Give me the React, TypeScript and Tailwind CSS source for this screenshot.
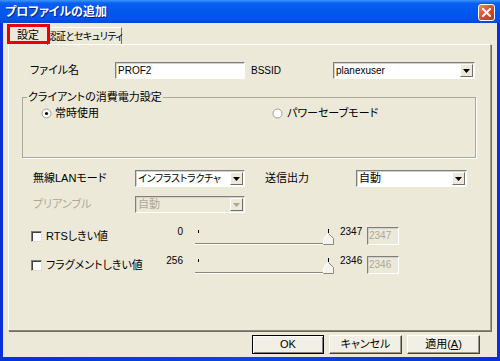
import React from 'react';

const FONT = "font-['Liberation_Sans','Noto_Sans_CJK_JP',sans-serif] [font-feature-settings:'palt']";

function Sunken({ className, disabled, children }: { className: string; disabled?: boolean; children?: React.ReactNode }) {
  return (
    <div
      className={`h-[17px] flex items-stretch border border-t-[#7F7F7F] border-l-[#7F7F7F] border-r-white border-b-white shadow-[inset_1px_1px_0_#D4D0C8] ${
        disabled ? 'bg-[#ECE9D8]' : 'bg-white'
      } ${className}`}
    >
      {children}
    </div>
  );
}

function Combo({ value, className, disabled }: { value: string; className: string; disabled?: boolean }) {
  return (
    <Sunken className={className} disabled={disabled}>
      <span className={`flex-1 min-w-0 overflow-hidden pl-[2px] leading-[15px] whitespace-nowrap ${disabled ? 'text-[#ACA899]' : 'text-black'}`}>{value}</span>
      <div className="py-px pr-px">
        <div className="h-full w-[13px] flex items-center justify-center bg-[#ECE9D8] border border-t-white border-l-white border-r-[#716F64] border-b-[#716F64]">
          <svg width="7" height="4" viewBox="0 0 7 4">
            <path d="M0 0h7L3.5 4z" fill={disabled ? '#ACA899' : '#000'} />
          </svg>
        </div>
      </div>
    </Sunken>
  );
}

function Radio({ checked }: { checked?: boolean }) {
  return (
    <svg width="11" height="11" viewBox="0 0 11 11">
      <circle cx="5.5" cy="5.5" r="4.5" fill="#fff" stroke="#A09E94" />
      {checked && <circle cx="5.5" cy="5.5" r="1.6" fill="#000" />}
    </svg>
  );
}

function CheckBox() {
  return <div className="w-[11px] h-[11px] bg-white border border-t-[#7F7F7F] border-l-[#7F7F7F] border-r-[#E0DED3] border-b-[#E0DED3] shadow-[inset_1px_1px_0_#404040]" />;
}

function Slider() {
  return (
    <svg width="142" height="18" viewBox="0 0 142 18" className="ml-[10px] shrink-0">
      <line x1="2" y1="16.5" x2="132" y2="16.5" stroke="#8C8A7E" />
      <line x1="2" y1="17.5" x2="132" y2="17.5" stroke="#FFFFFF" />
      <line x1="5.5" y1="3" x2="5.5" y2="6" stroke="#000" />
      <line x1="135.5" y1="2" x2="135.5" y2="6" stroke="#000" />
      <path d="M135.5 6.5L140.5 11.5V17.5H130.5V11.5Z" fill="#F4F3EE" stroke="#8C8A7E" />
      <path d="M130.5 17V11.5L135.5 6.5" fill="none" stroke="#fff" />
    </svg>
  );
}

function ThresholdRow({ label, min, max }: { label: string; min: string; max: string }) {
  return (
    <div className="flex items-center h-[18px]">
      <div className="ml-[22px]">
        <CheckBox />
      </div>
      <span className="ml-[4px] w-[117px] whitespace-nowrap">{label}</span>
      <span className="w-[20px] text-right text-[10px] self-start -mt-[3px]">{min}</span>
      <Slider />
      <span className="ml-[5px] w-[27px] text-[10px] self-start -mt-[3px]">{max}</span>
      <Sunken className="w-[32px] h-[18px]" disabled>
        <span className="pl-[1px] text-[10px] leading-[16px] text-[#ACA899]">{max}</span>
      </Sunken>
    </div>
  );
}

function Button({ children, primary, className }: { children: React.ReactNode; primary?: boolean; className: string }) {
  return (
    <button
      className={`h-[19px] bg-[#F2F0E6] text-[11px] text-black ${className} ${
        primary
          ? 'border border-black shadow-[inset_1px_1px_0_#fff,inset_-1px_-1px_0_#808080]'
          : 'border border-t-white border-l-white border-r-[#404040] border-b-[#404040] shadow-[inset_-1px_-1px_0_#9A988C]'
      }`}
    >
      {children}
    </button>
  );
}

export default function App() {
  return (
    <div className={`w-[500px] h-[361px] flex flex-col bg-[linear-gradient(to_right,#0831D9,#0A46E0_50%,#0831D9)] text-[11px] text-black ${FONT}`}>
      {/* Title bar */}
      <div className="h-[23px] shrink-0 flex items-center justify-between pl-[5px] pr-[5px] bg-[linear-gradient(to_bottom,#3D95FF_0%,#0A5FF2_14%,#0058EE_45%,#0055E8_80%,#0047D8_100%)]">
        <span className="text-[12px] font-bold text-white [text-shadow:1px_1px_0_#0A1E8C] whitespace-nowrap">プロファイルの追加</span>
        <div className="w-[17px] h-[17px] mt-[1px] rounded-[3px] border border-white bg-[linear-gradient(135deg,#EC8A6A,#D5502C_50%,#B93A16)] flex items-center justify-center">
          <svg width="9" height="9" viewBox="0 0 9 9">
            <path d="M1 1L8 8M8 1L1 8" stroke="#fff" strokeWidth="2" strokeLinecap="square" />
          </svg>
        </div>
      </div>

      {/* Client area */}
      <div className="relative flex-1 mx-[3px] mb-[4px] bg-[#ECE9D8] flex flex-col">
        {/* Tabs */}
        <div className="h-[21px] flex items-end pl-[5px]">
          <div className="relative top-[1px] z-10 w-[40px] h-[20px] bg-[#ECE9D8] border-t border-l border-r border-t-white border-l-white border-r-[#716F64] flex items-center justify-center">
            設定
          </div>
          <div className="w-[74px] h-[17px] border-t border-r border-t-white border-r-[#716F64] flex items-center justify-center whitespace-nowrap text-[10px] tracking-[-0.5px]">
            認証とセキュリティ
          </div>
        </div>
        <div className="absolute left-[4px] top-[1px] w-[43px] h-[20px] border-[3px] border-[#E8000B] z-20" />

        {/* Panel */}
        <div className="ml-[5px] w-[483px] h-[287px] shrink-0 border border-t-white border-l-white border-r-[#9D9B8F] border-b-[#8A887A] shadow-[1px_1px_0_#6F6D62] flex flex-col">
          <div className="mt-[17px] flex items-center h-[17px]">
            <span className="ml-[21px] w-[85px]">ファイル名</span>
            <Sunken className="w-[130px]">
              <span className="pl-[2px] text-[10px] leading-[15px]">PROF2</span>
            </Sunken>
            <span className="ml-[6px] w-[82px] text-[10px]">BSSID</span>
            <Combo value="planexuser" className="w-[142px] text-[10px]" />
          </div>

          <fieldset className="mt-[11px] ml-[13px] w-[454px] h-[68px] border border-[#ACA899] shadow-[1px_1px_0_#fff]">
            <legend className="ml-[4px] px-[1px] leading-[14px]">クライアントの消費電力設定</legend>
            <div className="mt-[2px] flex items-center h-[14px]">
              <div className="ml-[18px] w-[231px] flex items-center">
                <Radio checked />
                <span className="ml-[3px]">常時使用</span>
              </div>
              <div className="flex items-center">
                <Radio />
                <span className="ml-[4px]">パワーセーブモード</span>
              </div>
            </div>
          </fieldset>

          <div className="mt-[12px] flex items-center h-[17px]">
            <span className="ml-[24px] w-[102px]">無線LANモード</span>
            <Combo value="インフラストラクチャ" className="w-[110px] text-[10px] tracking-[-0.3px]" />
            <span className="ml-[20px] w-[91px]">送信出力</span>
            <Combo value="自動" className="w-[111px]" />
          </div>

          <div className="mt-[9px] flex items-center h-[17px]">
            <span className="ml-[24px] w-[102px] text-[#ACA899]">プリアンブル</span>
            <Combo value="自動" className="w-[110px]" disabled />
          </div>

          <div className="mt-[14px]">
            <ThresholdRow label="RTSしきい値" min="0" max="2347" />
          </div>
          <div className="mt-[11px]">
            <ThresholdRow label="フラグメントしきい値" min="256" max="2346" />
          </div>
        </div>

        {/* Buttons */}
        <div className="mt-[4px] flex justify-end gap-[5px] pr-[17px]">
          <Button primary className="w-[72px]">OK</Button>
          <Button className="w-[73px]">キャンセル</Button>
          <Button className="w-[73px]">
            適用(<span className="underline">A</span>)
          </Button>
        </div>
      </div>
    </div>
  );
}
